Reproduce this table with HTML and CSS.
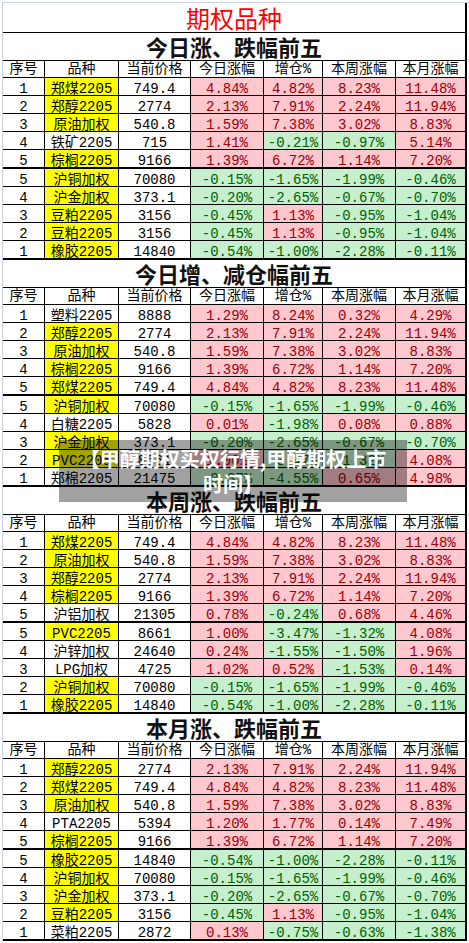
FILE: index.html
```html
<!DOCTYPE html>
<html lang="zh">
<head>
<meta charset="utf-8">
<title>期权品种</title>
<link rel="stylesheet" href="styles.css">
</head>
<body>
<div class="sheet">
  <div class="tbl">
    <div class="title">期权品种</div>

    <div class="sec-title">今日涨、跌幅前五</div>
    <div class="row head"><span>序号</span><span>品种</span><span>当前价格</span><span>今日涨幅</span><span>增仓%</span><span>本周涨幅</span><span>本月涨幅</span></div>
    <div class="row"><span>1</span><span class="y">郑煤2205</span><span>749.4</span><span class="r">4.84%</span><span class="r">4.82%</span><span class="r">8.23%</span><span class="r">11.48%</span></div>
    <div class="row"><span>2</span><span class="y">郑醇2205</span><span>2774</span><span class="r">2.13%</span><span class="r">7.91%</span><span class="r">2.24%</span><span class="r">11.94%</span></div>
    <div class="row"><span>3</span><span class="y">原油加权</span><span>540.8</span><span class="r">1.59%</span><span class="r">7.38%</span><span class="r">3.02%</span><span class="r">8.83%</span></div>
    <div class="row"><span>4</span><span>铁矿2205</span><span>715</span><span class="r">1.41%</span><span class="g">-0.21%</span><span class="g">-0.97%</span><span class="r">5.14%</span></div>
    <div class="row sep"><span>5</span><span class="y">棕榈2205</span><span>9166</span><span class="r">1.39%</span><span class="r">6.72%</span><span class="r">1.14%</span><span class="r">7.20%</span></div>
    <div class="row"><span>5</span><span class="y">沪铜加权</span><span>70080</span><span class="g">-0.15%</span><span class="g">-1.65%</span><span class="g">-1.99%</span><span class="g">-0.46%</span></div>
    <div class="row"><span>4</span><span class="y">沪金加权</span><span>373.1</span><span class="g">-0.20%</span><span class="g">-2.65%</span><span class="g">-0.67%</span><span class="g">-0.70%</span></div>
    <div class="row"><span>3</span><span class="y">豆粕2205</span><span>3156</span><span class="g">-0.45%</span><span class="r">1.13%</span><span class="g">-0.95%</span><span class="g">-1.04%</span></div>
    <div class="row"><span>2</span><span class="y">豆粕2205</span><span>3156</span><span class="g">-0.45%</span><span class="r">1.13%</span><span class="g">-0.95%</span><span class="g">-1.04%</span></div>
    <div class="row sep"><span>1</span><span class="y">橡胶2205</span><span>14840</span><span class="g">-0.54%</span><span class="g">-1.00%</span><span class="g">-2.28%</span><span class="g">-0.11%</span></div>

    <div class="sec-title">今日增、减仓幅前五</div>
    <div class="row head"><span>序号</span><span>品种</span><span>当前价格</span><span>今日涨幅</span><span>增仓%</span><span>本周涨幅</span><span>本月涨幅</span></div>
    <div class="row"><span>1</span><span>塑料2205</span><span>8888</span><span class="r">1.29%</span><span class="r">8.24%</span><span class="r">0.32%</span><span class="r">4.29%</span></div>
    <div class="row"><span>2</span><span class="y">郑醇2205</span><span>2774</span><span class="r">2.13%</span><span class="r">7.91%</span><span class="r">2.24%</span><span class="r">11.94%</span></div>
    <div class="row"><span>3</span><span class="y">原油加权</span><span>540.8</span><span class="r">1.59%</span><span class="r">7.38%</span><span class="r">3.02%</span><span class="r">8.83%</span></div>
    <div class="row"><span>4</span><span class="y">棕榈2205</span><span>9166</span><span class="r">1.39%</span><span class="r">6.72%</span><span class="r">1.14%</span><span class="r">7.20%</span></div>
    <div class="row sep"><span>5</span><span class="y">郑煤2205</span><span>749.4</span><span class="r">4.84%</span><span class="r">4.82%</span><span class="r">8.23%</span><span class="r">11.48%</span></div>
    <div class="row"><span>5</span><span class="y">沪铜加权</span><span>70080</span><span class="g">-0.15%</span><span class="g">-1.65%</span><span class="g">-1.99%</span><span class="g">-0.46%</span></div>
    <div class="row"><span>4</span><span>白糖2205</span><span>5828</span><span class="r">0.01%</span><span class="g">-1.98%</span><span class="r">0.08%</span><span class="r">0.88%</span></div>
    <div class="row"><span>3</span><span class="y">沪金加权</span><span>373.1</span><span class="g">-0.20%</span><span class="g">-2.65%</span><span class="g">-0.67%</span><span class="g">-0.70%</span></div>
    <div class="row"><span>2</span><span class="y">PVC2205</span><span>8661</span><span class="r">1.00%</span><span class="g">-3.47%</span><span class="g">-1.32%</span><span class="r">4.08%</span></div>
    <div class="row sep"><span>1</span><span>郑棉2205</span><span>21475</span><span class="g">-0.37%</span><span class="g">-4.55%</span><span class="r">0.65%</span><span class="r">4.98%</span></div>

    <div class="sec-title">本周涨、跌幅前五</div>
    <div class="row head"><span>序号</span><span>品种</span><span>当前价格</span><span>今日涨幅</span><span>增仓%</span><span>本周涨幅</span><span>本月涨幅</span></div>
    <div class="row"><span>1</span><span class="y">郑煤2205</span><span>749.4</span><span class="r">4.84%</span><span class="r">4.82%</span><span class="r">8.23%</span><span class="r">11.48%</span></div>
    <div class="row"><span>2</span><span class="y">原油加权</span><span>540.8</span><span class="r">1.59%</span><span class="r">7.38%</span><span class="r">3.02%</span><span class="r">8.83%</span></div>
    <div class="row"><span>3</span><span class="y">郑醇2205</span><span>2774</span><span class="r">2.13%</span><span class="r">7.91%</span><span class="r">2.24%</span><span class="r">11.94%</span></div>
    <div class="row"><span>4</span><span class="y">棕榈2205</span><span>9166</span><span class="r">1.39%</span><span class="r">6.72%</span><span class="r">1.14%</span><span class="r">7.20%</span></div>
    <div class="row sep"><span>5</span><span>沪铝加权</span><span>21305</span><span class="r">0.78%</span><span class="g">-0.24%</span><span class="r">0.68%</span><span class="r">4.46%</span></div>
    <div class="row"><span>5</span><span class="y">PVC2205</span><span>8661</span><span class="r">1.00%</span><span class="g">-3.47%</span><span class="g">-1.32%</span><span class="r">4.08%</span></div>
    <div class="row"><span>4</span><span>沪锌加权</span><span>24640</span><span class="r">0.24%</span><span class="g">-1.55%</span><span class="g">-1.50%</span><span class="r">1.96%</span></div>
    <div class="row"><span>3</span><span>LPG加权</span><span>4725</span><span class="r">1.02%</span><span class="r">0.52%</span><span class="g">-1.53%</span><span class="r">0.14%</span></div>
    <div class="row"><span>2</span><span class="y">沪铜加权</span><span>70080</span><span class="g">-0.15%</span><span class="g">-1.65%</span><span class="g">-1.99%</span><span class="g">-0.46%</span></div>
    <div class="row sep"><span>1</span><span class="y">橡胶2205</span><span>14840</span><span class="g">-0.54%</span><span class="g">-1.00%</span><span class="g">-2.28%</span><span class="g">-0.11%</span></div>

    <div class="sec-title">本月涨、跌幅前五</div>
    <div class="row head"><span>序号</span><span>品种</span><span>当前价格</span><span>今日涨幅</span><span>增仓%</span><span>本周涨幅</span><span>本月涨幅</span></div>
    <div class="row"><span>1</span><span class="y">郑醇2205</span><span>2774</span><span class="r">2.13%</span><span class="r">7.91%</span><span class="r">2.24%</span><span class="r">11.94%</span></div>
    <div class="row"><span>2</span><span class="y">郑煤2205</span><span>749.4</span><span class="r">4.84%</span><span class="r">4.82%</span><span class="r">8.23%</span><span class="r">11.48%</span></div>
    <div class="row"><span>3</span><span class="y">原油加权</span><span>540.8</span><span class="r">1.59%</span><span class="r">7.38%</span><span class="r">3.02%</span><span class="r">8.83%</span></div>
    <div class="row"><span>4</span><span>PTA2205</span><span>5394</span><span class="r">1.20%</span><span class="r">1.77%</span><span class="r">0.14%</span><span class="r">7.49%</span></div>
    <div class="row sep"><span>5</span><span class="y">棕榈2205</span><span>9166</span><span class="r">1.39%</span><span class="r">6.72%</span><span class="r">1.14%</span><span class="r">7.20%</span></div>
    <div class="row"><span>5</span><span class="y">橡胶2205</span><span>14840</span><span class="g">-0.54%</span><span class="g">-1.00%</span><span class="g">-2.28%</span><span class="g">-0.11%</span></div>
    <div class="row"><span>4</span><span class="y">沪铜加权</span><span>70080</span><span class="g">-0.15%</span><span class="g">-1.65%</span><span class="g">-1.99%</span><span class="g">-0.46%</span></div>
    <div class="row"><span>3</span><span class="y">沪金加权</span><span>373.1</span><span class="g">-0.20%</span><span class="g">-2.65%</span><span class="g">-0.67%</span><span class="g">-0.70%</span></div>
    <div class="row"><span>2</span><span class="y">豆粕2205</span><span>3156</span><span class="g">-0.45%</span><span class="r">1.13%</span><span class="g">-0.95%</span><span class="g">-1.04%</span></div>
    <div class="row sep"><span>1</span><span>菜粕2205</span><span>2872</span><span class="r">0.13%</span><span class="g">-0.75%</span><span class="g">-0.63%</span><span class="g">-1.38%</span></div>
  </div>
</div>
<div class="overlay">【甲醇期权买权行情,甲醇期权上市<br>时间】</div>
</body>
</html>
```

FILE: styles.css
```css
* {
  box-sizing: border-box;
  margin: 0;
  padding: 0;
}

html, body {
  background: #ffffff;
}

body {
  position: relative;
  width: 469px;
  height: 943px;
  overflow: hidden;
  font-family: "Liberation Mono", "Noto Sans CJK SC", monospace;
  color: #000;
}

.sheet {
  margin: 2px 0 0 2px;
  height: 941px;
  border-top: 1px solid #c8d1e3;
  border-left: 1px solid #c8d1e3;
}

.tbl {
  width: 464px;
  border-right: 2px solid #000;
}

.title {
  height: 30px;
  border-bottom: 1px solid #000;
  text-align: center;
  font-family: "Noto Sans CJK SC", sans-serif;
  font-size: 24px;
  line-height: 29px;
  color: #ff0000;
}

.sec-title {
  height: 28px;
  border-bottom: 1px solid #000;
  text-align: center;
  font-family: "Noto Sans CJK SC", sans-serif;
  font-weight: 700;
  font-size: 22px;
  line-height: 27px;
  color: #111;
}

.row {
  display: grid;
  grid-template-columns: 41px 73px 71px 72px 58px 72px 69px;
  grid-template-rows: 17px;
  column-gap: 1px;
  height: 18px;
  background: #000;
  border-bottom: 1px solid #000;
  font-size: 14px;
  line-height: 17px;
}

.row > span {
  background: #fff;
  text-align: center;
  white-space: nowrap;
  padding-top: 3px;
  color: #000;
}

.row.sep {
  height: 19px;
  border-bottom-width: 2px;
}

.row.head {
  height: 17px;
  grid-template-rows: 16px;
  line-height: 16px;
}

.row.head > span {
  padding-top: 0;
}

.row > .y {
  background: #ffff00;
}

.row > .r {
  background: #ffc7ce;
  color: #9c0006;
}

.row > .g {
  background: #c6efce;
  color: #006100;
}

.overlay {
  position: absolute;
  left: 59px;
  top: 440px;
  width: 348px;
  height: 62px;
  padding-top: 6px;
  background: rgba(0, 0, 0, 0.37);
  color: #fff;
  text-align: center;
  font-family: "Noto Sans CJK SC", sans-serif;
  font-weight: 700;
  font-size: 20px;
  line-height: 25px;
}
```
